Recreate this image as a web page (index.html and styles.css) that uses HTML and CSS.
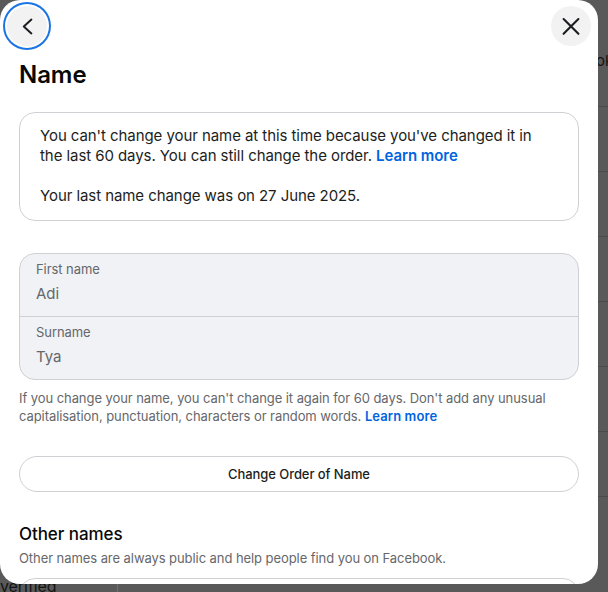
FILE: index.html
```html
<!DOCTYPE html>
<html lang="en">
<head>
<meta charset="utf-8">
<title>Name</title>
<link rel="stylesheet" href="styles.css">
</head>
<body>
  <div class="page">
    <div class="page-side">
      <span class="side-text">ok</span>
      <div class="side-rows">
        <div class="side-row"></div>
        <div class="side-row"></div>
        <div class="side-row"></div>
        <div class="side-row"></div>
        <div class="side-row"></div>
        <div class="side-row"></div>
        <div class="side-row"></div>
      </div>
    </div>
    <div class="page-foot">
      <span class="foot-text">verified</span>
    </div>
  </div>

  <div class="modal" role="dialog" aria-label="Name">
    <div class="modal-head">
      <button class="icon-btn focused" aria-label="Back">
        <svg width="40" height="40" viewBox="0 0 40 40"><path d="M24.4 13.6 L16.8 20.5 L24.4 27.4" fill="none" stroke="#1c1e21" stroke-width="2" stroke-linecap="round" stroke-linejoin="round"/></svg>
      </button>
      <button class="icon-btn" aria-label="Close">
        <svg width="40" height="40" viewBox="0 0 40 40"><path d="M12.6 13 L27.4 27.8 M27.4 13 L12.6 27.8" fill="none" stroke="#1c1e21" stroke-width="2.1" stroke-linecap="round"/></svg>
      </button>
    </div>
    <div class="modal-body">
      <h1 class="title">Name</h1>
      <div class="notice">
        <p>You can't change your name at this time because you've changed it in the last 60 days. You can still change the order. <a class="link" href="#">Learn more</a></p>
        <p>Your last name change was on 27 June 2025.</p>
      </div>
      <div class="fields">
        <div class="field">
          <div class="field-label">First name</div>
          <div class="field-value">Adi</div>
        </div>
        <div class="field">
          <div class="field-label">Surname</div>
          <div class="field-value">Tya</div>
        </div>
      </div>
      <p class="help">If you change your name, you can't change it again for 60 days. Don't add any unusual capitalisation, punctuation, characters or random words. <a class="link" href="#">Learn more</a></p>
      <button class="btn">Change Order of Name</button>
      <h2 class="section-title">Other names</h2>
      <p class="section-sub">Other names are always public and help people find you on Facebook.</p>
      <div class="other-card"></div>
    </div>
  </div>
</body>
</html>
```

FILE: styles.css
```css
html, body {
  margin: 0;
  padding: 0;
}
body {
  width: 608px;
  height: 592px;
  overflow: hidden;
  position: relative;
  background: #595959;
  font-family: Inter, "Liberation Sans", Arial, sans-serif;
  letter-spacing: -0.07px;
}

/* dimmed page behind the dialog */
.page {
  display: grid;
  grid-template-columns: 598px 10px;
  grid-template-rows: 584px 8px;
  height: 592px;
}
.page-side {
  grid-column: 2;
  grid-row: 1;
  display: flex;
  flex-direction: column;
  overflow: hidden;
}
.side-text {
  margin: 51px 0 0 -2px;
  font-size: 15px;
  line-height: 20px;
  color: #141414;
  white-space: nowrap;
}
.side-rows {
  margin-top: 35px;
}
.side-row {
  height: 64px;
  border-top: 1px solid #4b4b4b;
}
.page-foot {
  grid-column: 1 / span 2;
  grid-row: 2;
  display: flex;
}
.foot-text {
  width: 117px;
  border-right: 1px solid #6e6e6e;
  margin-top: -6px;
  font-size: 16px;
  line-height: 16px;
  color: #141414;
}

/* dialog */
.modal {
  position: absolute;
  left: 0;
  top: 0;
  width: 598px;
  height: 584px;
  border-radius: 20px;
  background: #fff;
  overflow: hidden;
}
.modal-head {
  display: flex;
  justify-content: space-between;
  padding: 6px 7px 0;
}
.icon-btn {
  width: 40px;
  height: 40px;
  padding: 0;
  border: 0;
  border-radius: 50%;
  background: #f2f2f2;
  display: flex;
  align-items: center;
  justify-content: center;
}
.icon-btn svg {
  display: block;
}
.icon-btn.focused {
  box-shadow: 0 0 0 2px #fff, 0 0 0 4px #1b74e4;
}
.modal-body {
  padding: 0 19px;
}
.title {
  margin: 15px 0 23px;
  font-size: 24px;
  line-height: 28px;
  font-weight: 600;
  color: #080809;
}
.notice {
  border: 1px solid #ced0d4;
  border-radius: 16px;
  padding: 13px 28px 14px 20px;
  font-size: 15px;
  line-height: 20px;
  color: #1c1e21;
}
.notice p {
  margin: 0;
}
.notice p + p {
  margin-top: 20px;
}
.link {
  color: #0064e0;
  font-weight: 600;
  text-decoration: none;
}
.fields {
  margin-top: 32px;
  border: 1px solid #ced0d4;
  border-radius: 16px;
  background: #f0f2f5;
  overflow: hidden;
}
.field {
  padding: 7px 16px 12px;
}
.field + .field {
  border-top: 1px solid #ced0d4;
}
.field-label {
  font-size: 13px;
  line-height: 16px;
  color: #65676b;
  margin-bottom: 7px;
}
.field-value {
  font-size: 15px;
  line-height: 20px;
  color: #65676b;
}
.help {
  margin: 10px 0 0;
  font-size: 13px;
  line-height: 17.5px;
  color: #65676b;
}
.help .link {
  letter-spacing: 0.1px;
}
.btn {
  display: block;
  margin-top: 31px;
  width: 100%;
  height: 36px;
  border: 1px solid #ced0d4;
  border-radius: 18px;
  background: #fff;
  font-family: inherit;
  letter-spacing: inherit;
  font-size: 13px;
  font-weight: 500;
  color: #1c1e21;
}
.section-title {
  margin: 31px 0 5px;
  font-size: 17px;
  line-height: 22px;
  font-weight: 500;
  color: #080809;
}
.section-sub {
  margin: 0;
  font-size: 13px;
  line-height: 17px;
  color: #65676b;
}
.other-card {
  margin-top: 11px;
  height: 60px;
  border: 1px solid #ced0d4;
  border-radius: 16px;
}
```
